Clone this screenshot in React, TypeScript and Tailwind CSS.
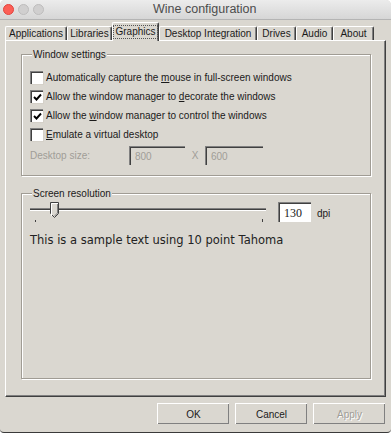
const SANS = "font-['Liberation_Sans',Arial,sans-serif]";

const tabs = [
  { label: "Applications", w: "w-[62px]" },
  { label: "Libraries", w: "w-[45px]" },
  { label: "Graphics", w: "w-[47px]", active: true },
  { label: "Desktop Integration", w: "w-[98px]" },
  { label: "Drives", w: "w-[39px]" },
  { label: "Audio", w: "w-[37px]" },
  { label: "About", w: "w-[41px]" },
];

function Check({ checked }: { checked?: boolean }) {
  return (
    <div className="w-[13px] h-[13px] shrink-0 bg-white border-t border-l border-[#808080] border-b-white border-r-white shadow-[inset_1px_1px_0_#404040,1px_1px_0_#d4d0c8] flex items-center justify-center">
      {checked && (
        <svg width="11" height="11" viewBox="0 0 11 11">
          <polyline points="2,5 4.5,7.5 9,2.5" fill="none" stroke="#000" strokeWidth="1.9" />
        </svg>
      )}
    </div>
  );
}

function CheckRow({ checked, children }: { checked?: boolean; children: React.ReactNode }) {
  return (
    <div className="h-[19px] flex items-center gap-[3px]">
      <Check checked={checked} />
      <span className="leading-[13px]">{children}</span>
    </div>
  );
}

function Sunken({ className, children }: { className: string; children?: React.ReactNode }) {
  return (
    <div
      className={
        "border-t border-l border-[#808080] border-b-white border-r-white shadow-[inset_1px_1px_0_#404040] flex items-center " +
        className
      }
    >
      {children}
    </div>
  );
}

function Button({ children, disabled }: { children: React.ReactNode; disabled?: boolean }) {
  return (
    <div className="w-[72px] h-[21px] flex items-center justify-center border-t border-l border-white border-b-[#404040] border-r-[#404040] shadow-[inset_-1px_-1px_0_#808080]">
      <span className={disabled ? "text-[#a09d97] [text-shadow:1px_1px_0_#fff]" : "text-[#1a1a1a]"}>{children}</span>
    </div>
  );
}

function TrackBar() {
  return (
    <svg width="236" height="22" viewBox="0 0 236 22" className="shrink-0">
      <line x1="0" y1="8.5" x2="236" y2="8.5" stroke="#808080" />
      <line x1="0" y1="9.5" x2="236" y2="9.5" stroke="#404040" />
      <line x1="0" y1="10.5" x2="236" y2="10.5" stroke="#ffffff" />
      <path d="M20.5 2.5 H28.5 V13.5 L24.5 17.5 L20.5 13.5 Z" fill="#dad7d0" stroke="#404040" />
      <path d="M21.5 16 V3.5 H28" fill="none" stroke="#ffffff" />
      <path d="M27.5 4 V13 L24.5 16" fill="none" stroke="#808080" />
      <line x1="5.5" y1="20" x2="5.5" y2="22" stroke="#404040" />
      <line x1="232.5" y1="19" x2="232.5" y2="22" stroke="#404040" />
    </svg>
  );
}

export default function App() {
  return (
    <div className={"w-[391px] h-[433px] bg-[#dad7d0] flex flex-col rounded-t-[5px] rounded-b-[4px] border-b border-[#3a3a3a] overflow-hidden text-[10px] text-[#1a1a1a] " + SANS}>
      <div className="h-[20px] shrink-0 flex items-center bg-gradient-to-b from-[#ececec] to-[#d6d6d6] border-b border-[#b4b4b4]">
        <div className="flex gap-[4px] pl-[3px]">
          <div className="w-[11px] h-[11px] rounded-full bg-[#fc5f57] border border-[#e0443e]" />
          <div className="w-[11px] h-[11px] rounded-full bg-[#d0cfcf] border border-[#bdbcbc]" />
          <div className="w-[11px] h-[11px] rounded-full bg-[#d0cfcf] border border-[#bdbcbc]" />
        </div>
        <div className="ml-[109px] text-[12.5px] text-[#4d4d4d]">Wine configuration</div>
      </div>

      <div className="px-[5px] pt-[2px] flex flex-col">
        <div className="h-[18px] flex items-end">
          {tabs.map((t) =>
            t.active ? (
              <div
                key={t.label}
                className={t.w + " h-[19px] -mb-[1px] relative z-10 bg-[#dad7d0] border-t border-l border-white border-r border-r-[#404040] shadow-[inset_-1px_0_0_#808080] rounded-t-[2px] flex items-center justify-center"}
              >
                <span className="border border-dotted border-[#555] px-[1px] leading-[11px] pb-[1px]">{t.label}</span>
              </div>
            ) : (
              <div
                key={t.label}
                className={t.w + " h-[14px] border-t border-l border-white border-r border-r-[#404040] shadow-[inset_-1px_0_0_#808080] rounded-t-[2px] flex items-center justify-center leading-[13px]"}
              >
                {t.label}
              </div>
            )
          )}
        </div>

        <div className="h-[357px] border-t border-l border-white border-r border-b border-r-[#404040] border-b-[#404040] shadow-[inset_-1px_-1px_0_#808080] pl-[15px] pt-[7px]">
          <fieldset className="w-[350px] border border-[#a09c94] shadow-[inset_1px_1px_0_#fff,1px_1px_0_#fff] px-[8px] pt-[7px] pb-[10px]">
            <legend className="ml-[2px] px-[1px] leading-[13px] bg-[#dad7d0]">Window settings</legend>
            <CheckRow>
              Automatically capture the <span className="underline">m</span>ouse in full-screen windows
            </CheckRow>
            <CheckRow checked>
              Allow the window manager to <span className="underline">d</span>ecorate the windows
            </CheckRow>
            <CheckRow checked>
              Allow the <span className="underline">w</span>indow manager to control the windows
            </CheckRow>
            <CheckRow>
              <span className="underline">E</span>mulate a virtual desktop
            </CheckRow>
            <div className="h-[19px] mt-[2px] flex items-center text-[#a09d97]">
              <span className="w-[99px]">Desktop size:</span>
              <Sunken className="w-[56px] h-[19px] pl-[5px]">800</Sunken>
              <span className="w-[20px] text-center">X</span>
              <Sunken className="w-[58px] h-[19px] pl-[5px]">600</Sunken>
            </div>
          </fieldset>

          <fieldset className="w-[350px] h-[192px] mt-[11px] border border-[#a09c94] shadow-[inset_1px_1px_0_#fff,1px_1px_0_#fff] px-[8px] pt-[0px]">
            <legend className="ml-[2px] px-[1px] leading-[13px] bg-[#dad7d0]">Screen resolution</legend>
            <div className="flex items-start">
              <TrackBar />
              <Sunken className="ml-[12px] mt-[2px] w-[33px] h-[20px] bg-white pl-[5px] font-['Liberation_Serif',serif] text-[12px]">130</Sunken>
              <span className="ml-[6px] mt-[6px]">dpi</span>
            </div>
            <div className="mt-[11px] font-['DejaVu_Sans',sans-serif] text-[11.5px] leading-[14px] text-[#222]">
              This is a sample text using 10 point Tahoma
            </div>
          </fieldset>
        </div>

        <div className="mt-[6px] flex justify-end gap-[6px] pr-[1px]">
          <Button>OK</Button>
          <Button>Cancel</Button>
          <Button disabled>Apply</Button>
        </div>
      </div>
    </div>
  );
}
